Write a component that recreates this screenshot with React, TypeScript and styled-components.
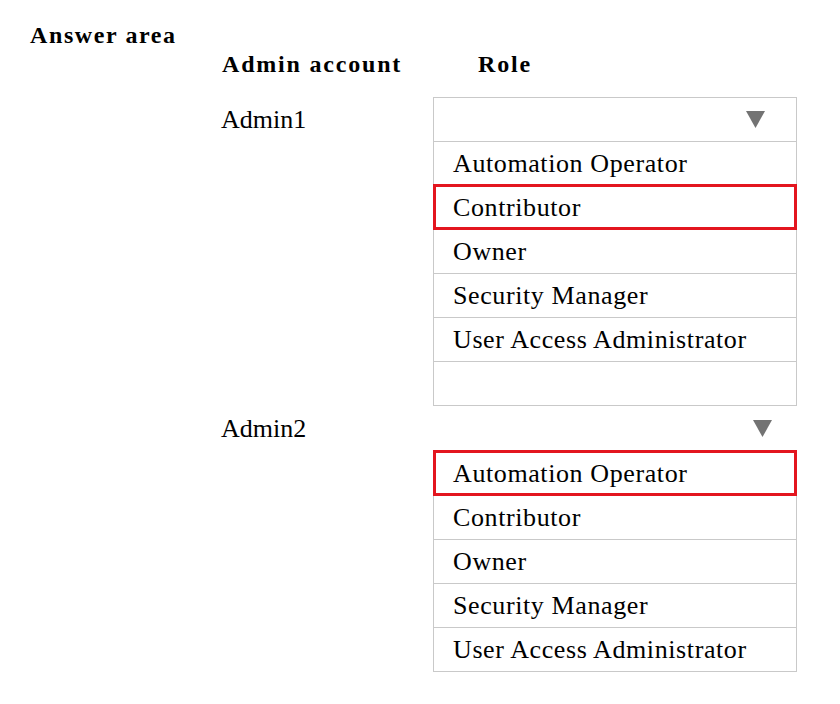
import { Fragment } from "react";
import styled, { createGlobalStyle } from "styled-components";

const ROLES = [
  "Automation Operator",
  "Contributor",
  "Owner",
  "Security Manager",
  "User Access Administrator",
];

const ACCOUNTS = [
  { name: "Admin1", selected: "Contributor", framed: true, blankRow: true },
  { name: "Admin2", selected: "Automation Operator", framed: false, blankRow: false },
];

const GlobalStyle = createGlobalStyle`
  html, body {
    margin: 0;
    background: #ffffff;
  }
  body {
    font-family: "Liberation Serif", "Times New Roman", serif;
    color: #000000;
  }
`;

const Page = styled.main`
  width: 840px;
  height: 704px;
  padding: 23px 0 0 30px;
  box-sizing: border-box;
`;

const Title = styled.h2`
  margin: 0;
  font-size: 24px;
  line-height: 24px;
  font-weight: 700;
  letter-spacing: 1.6px;
`;

const Table = styled.section`
  display: grid;
  grid-template-columns: 213px 364px;
  margin: 5px 0 0 190px;
`;

const ColHead = styled.div<{ $indent?: number }>`
  height: 24px;
  margin-bottom: 21px;
  padding-left: ${(p) => p.$indent ?? 2}px;
  font-size: 24px;
  line-height: 24px;
  font-weight: 700;
  letter-spacing: 1.8px;
`;

const AccountLabel = styled.div`
  display: flex;
  align-items: center;
  height: 45px;
  padding-left: 1px;
  font-size: 26px;
`;

const Dropdown = styled.div<{ $framed: boolean }>`
  display: flex;
  flex-direction: column;
  border: ${(p) => (p.$framed ? "1px solid #c9c9c9" : "none")};
`;

const Header = styled.div<{ $framed: boolean }>`
  display: flex;
  align-items: center;
  justify-content: flex-end;
  height: ${(p) => (p.$framed ? 44 : 45)}px;
  padding-right: ${(p) => (p.$framed ? 31 : 25)}px;
  box-sizing: border-box;
  border-bottom: ${(p) => (p.$framed ? "1px solid #c9c9c9" : "none")};
`;

const OptionList = styled.ul<{ $framed: boolean }>`
  list-style: none;
  margin: 0;
  padding: 0;
  border: ${(p) => (p.$framed ? "none" : "1px solid #c9c9c9")};
`;

const Option = styled.li<{ $selected?: boolean }>`
  position: relative;
  display: flex;
  align-items: center;
  height: 44px;
  box-sizing: border-box;
  padding-left: 19px;
  font-size: 26px;
  letter-spacing: 0.6px;
  white-space: nowrap;
  border-bottom: 1px solid #c9c9c9;

  &:last-child {
    border-bottom: none;
    height: 43px;
  }

  &::after {
    content: "";
    display: ${(p) => (p.$selected ? "block" : "none")};
    position: absolute;
    inset: -2px -1px -1px -1px;
    border: 3px solid #e3161f;
  }
`;

const Caret = () => (
  <svg width="19" height="17" viewBox="0 0 19 17">
    <polygon points="0,0 19,0 9.5,17" fill="#737373" />
  </svg>
);

export default function App() {
  return (
    <>
      <GlobalStyle />
      <Page>
        <Title>Answer area</Title>
        <Table>
          <ColHead>Admin account</ColHead>
          <ColHead $indent={45}>Role</ColHead>
          {ACCOUNTS.map((acc) => (
            <Fragment key={acc.name}>
              <AccountLabel>{acc.name}</AccountLabel>
              <Dropdown $framed={acc.framed}>
                <Header $framed={acc.framed}>
                  <Caret />
                </Header>
                <OptionList $framed={acc.framed}>
                  {ROLES.map((role) => (
                    <Option key={role} $selected={role === acc.selected}>
                      {role}
                    </Option>
                  ))}
                  {acc.blankRow && <Option />}
                </OptionList>
              </Dropdown>
            </Fragment>
          ))}
        </Table>
      </Page>
    </>
  );
}
